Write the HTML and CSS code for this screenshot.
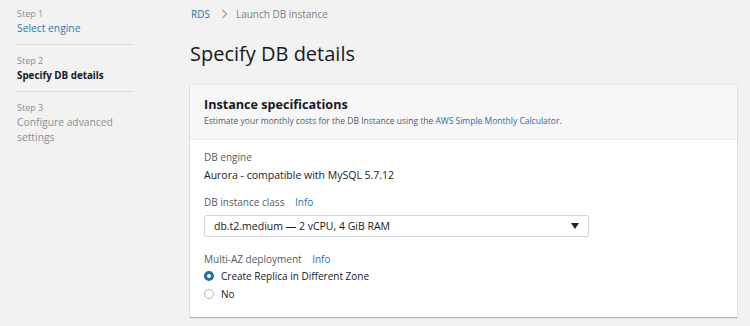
FILE: index.html
```html
<!DOCTYPE html>
<html lang="en">
<head>
  <meta charset="UTF-8">
  <title>Specify DB details</title>
  <link rel="stylesheet" href="styles.css">
</head>
<body>
  <div class="page">
    <div class="steps">
      <div class="step">
        <div class="step-num">Step 1</div>
        <div class="step-name done">Select engine</div>
      </div>
      <div class="step">
        <div class="step-num">Step 2</div>
        <div class="step-name current">Specify DB details</div>
      </div>
      <div class="step last">
        <div class="step-num">Step 3</div>
        <div class="step-name">Configure advanced settings</div>
      </div>
    </div>

    <div class="main">
      <div class="crumbs">
        <a class="crumb-link">RDS</a>
        <svg class="crumb-sep" width="7" height="10" viewBox="0 0 7 10"><path d="M1.5 1 L5.5 5 L1.5 9" fill="none" stroke="#9a9ea2" stroke-width="1.2"/></svg>
        <span class="crumb-here">Launch DB instance</span>
      </div>
      <h1>Specify DB details</h1>

      <div class="card">
        <div class="card-head">
          <h2>Instance specifications</h2>
          <p>Estimate your monthly costs for the DB Instance using the <a>AWS Simple Monthly Calculator</a>.</p>
        </div>
        <div class="card-body">
          <div class="field">
            <div class="label">DB engine</div>
            <div class="value">Aurora - compatible with MySQL 5.7.12</div>
          </div>
          <div class="field">
            <div class="label">DB instance class <a class="info">Info</a></div>
            <div class="select">
              <span>db.t2.medium — 2 vCPU, 4 GiB RAM</span>
              <span class="caret"></span>
            </div>
          </div>
          <div class="field radios">
            <div class="label">Multi-AZ deployment <a class="info">Info</a></div>
            <div class="radio"><span class="dot on"></span>Create Replica in Different Zone</div>
            <div class="radio"><span class="dot"></span>No</div>
          </div>
        </div>
      </div>
    </div>
  </div>
</body>
</html>
```

FILE: styles.css
```css
body {
  margin: 0;
  background-color: #f2f2f2;
  font-family: "Open Sans", "Noto Sans", sans-serif;
  color: #16191f;
}

.page {
  display: flex;
  height: 326px;
}

.steps {
  width: 116px;
  padding: 7px 0 0 17px;
  margin-right: 57px;
}

.step {
  border-bottom: 1px solid #dcdcdc;
  padding: 0 0 8px;
  margin-bottom: 9px;
}

.step.last {
  border-bottom: none;
}

.step-num {
  font-size: 9px;
  line-height: 14px;
  color: #8a8f93;
}

.step-name {
  font-size: 10.3px;
  line-height: 15px;
  color: #8a8f93;
}

.step-name.done {
  color: #1f7bb8;
}

.step-name.current {
  color: #16191f;
  font-weight: bold;
  font-size: 9.8px;
}

.main {
  flex: 1;
  margin-right: 13px;
}

.crumbs {
  display: flex;
  align-items: center;
  font-size: 10px;
  line-height: 14px;
  padding: 7px 0 0 1px;
  color: #7d8185;
}

.crumb-link {
  color: #1f6fa8;
}

.crumb-sep {
  margin: 0 8px 0 11px;
}

h1 {
  font-size: 20px;
  font-weight: normal;
  line-height: 28px;
  margin: 19px 0 0;
  color: #16191f;
}

.card {
  margin-top: 17px;
  background-color: #fff;
  box-shadow: 0 1px 1px rgba(0, 0, 0, 0.25), 0 0 0 1px rgba(0, 0, 0, 0.04);
}

.card-head {
  background-color: #f7f7f7;
  padding: 11px 14px 12px;
  border-bottom: 1px solid #efefef;
}

h2 {
  font-size: 12.6px;
  line-height: 18px;
  margin: 0;
}

.card-head p {
  margin: 1px 0 0;
  font-size: 8.5px;
  line-height: 12px;
  color: #545b64;
}

.card-head a,
.info {
  color: #1f6fa8;
}

.card-body {
  padding: 9px 14px 5px;
}

.field {
  margin-bottom: 9px;
}

.field.radios {
  margin-top: 14px;
}

.label {
  font-size: 10px;
  line-height: 16px;
  color: #545b64;
}

.info {
  margin-left: 8px;
}

.value {
  font-size: 10.5px;
  line-height: 20px;
}

.select {
  display: flex;
  justify-content: space-between;
  align-items: center;
  width: 385px;
  height: 22px;
  box-sizing: border-box;
  margin-top: 5px;
  padding: 0 9px;
  border: 1px solid #d5d8db;
  border-radius: 2px;
  font-size: 10.5px;
}

.caret {
  width: 0;
  height: 0;
  border-left: 4px solid transparent;
  border-right: 4px solid transparent;
  border-top: 6px solid #222;
}

.radio {
  display: flex;
  align-items: center;
  font-size: 10px;
  line-height: 18px;
}

.dot {
  width: 10px;
  height: 10px;
  box-sizing: border-box;
  border: 1px solid #aab7b8;
  border-radius: 50%;
  margin-right: 7px;
}

.dot.on {
  border: 3px solid #1f6fa8;
}
```
